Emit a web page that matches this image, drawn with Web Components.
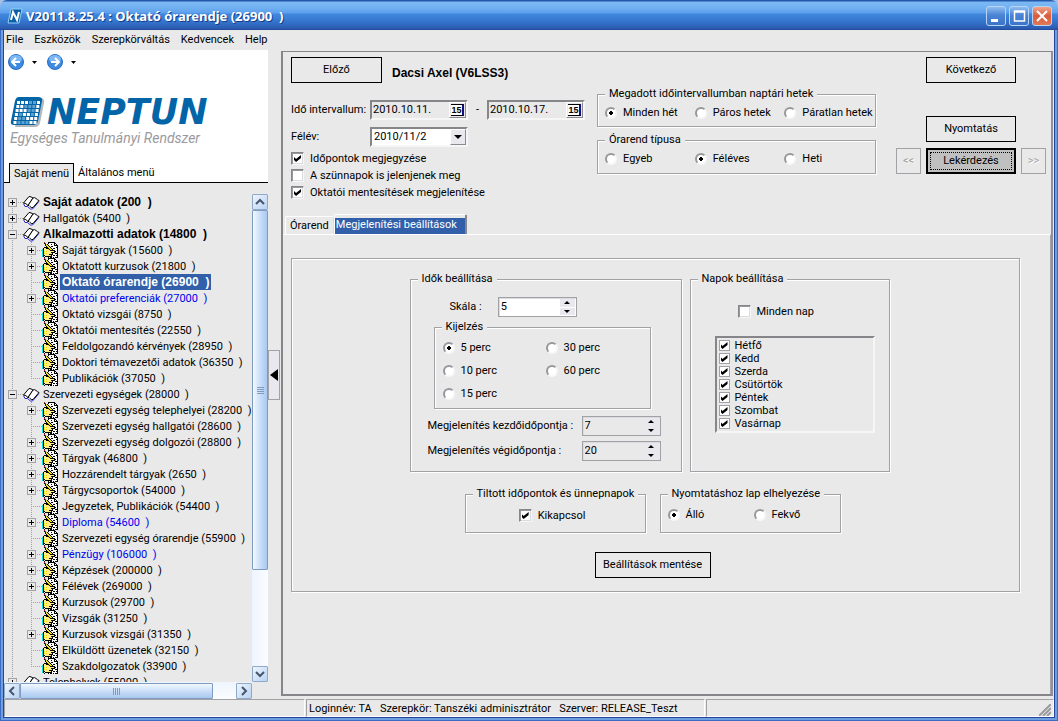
<!DOCTYPE html>
<html lang="hu">
<head>
<meta charset="utf-8">
<title>Oktató órarendje</title>
<style>
html,body{height:100%;margin:0}
body{font:11px/14px Roboto,"Liberation Sans",Arial,sans-serif;color:#000;background:#a9bfe6;overflow:hidden;
--face:#e9e9e9;--line:#a2a2a6;--dark:#85858a;--sel:#315fa9}
</style>
</head>
<body>
<neptun-app></neptun-app>
<script>
const define=(name,css,html,init)=>customElements.define(name,class extends HTMLElement{
  constructor(){super();this.attachShadow({mode:"open"})}
  connectedCallback(){
    if(this.shadowRoot.childNodes.length)return;
    const body=typeof html==="function"?html(this):html;
    this.shadowRoot.innerHTML=`<style>*{box-sizing:border-box}:host{box-sizing:border-box}button,input,select{font:inherit;color:inherit;margin:0}${css}</style>${body}`;
    if(init)init(this);
  }
});
const at=(el,n,d="")=>el.getAttribute(n)??d;

/* title bar */
define("title-bar",`
:host{display:flex;align-items:center;height:30px;padding:2px 6px 0 7px;gap:3px;border-radius:7px 7px 0 0;
background:linear-gradient(#2358ac 0,#2358ac 1px,#7cb8f2 2px,#74b3f2 7px,#5d9fec 13px,#3f87dd 14px,#3a7fd6 18px,#3069c2 25px,#2a57ab 29px,#1f4392 30px)}
h1{flex:1;margin:0;font:bold 13px/20px "Noto Sans",sans-serif;color:#fff;white-space:pre;text-shadow:1px 1px #123c8c}
button{width:20px;height:20px;padding:0;border:1px solid #b7d3f5;border-radius:3px;background:linear-gradient(#8fbdf0,#4b84d4 45%,#3c74c8)}
button.x{background:linear-gradient(#f2a58c,#dc5a3a 50%,#e07a58)}
button svg{display:block}
`,`<svg width="16" height="16"><path d="M4 1h11l-3 14H1z" fill="#0b5fa8"/><path d="M4 1h11l-3 14H1z" fill="none" stroke="#8fd0f5"/><path d="M4 12 6 4l4 8 2-8" stroke="#fff" stroke-width="2" fill="none"/></svg>
<h1><slot></slot></h1>
<button aria-label="Kis méret"><svg width="18" height="18"><path d="M4 12h7v3H4z" fill="#fff"/></svg></button>
<button aria-label="Teljes méret"><svg width="18" height="18"><path d="M4.500 4h10v10h-10zM4 5h11" fill="none" stroke="#fff" stroke-width="1.500"/></svg></button>
<button class="x" aria-label="Bezárás"><svg width="18" height="18"><path d="m4 4 10 10M14 4 4 14" stroke="#fff" stroke-width="2"/></svg></button>`);

define("menu-bar",`:host{display:block;background:var(--face)}
nav{display:flex;height:20px;gap:11px;padding-left:2px}
button{border:0;padding:0;background:none}`,
`<nav>${["File","Eszközök","Szerepkörváltás","Kedvencek","Help"].map(t=>`<button>${t}</button>`).join("")}</nav>`);

/* controls */
define("ui-button",`:host{display:block}
button{width:100%;height:26px;padding:0;border:1px solid #000;background:var(--face);white-space:nowrap}
button.def{border-width:2px;background:#c0c0c0;outline:1px dotted #000;outline-offset:-5px}
button:disabled{padding:0;border-color:var(--line);color:#a2a2a6;text-shadow:1px 1px #fff}`,
el=>`<button class="${el.hasAttribute("default")?"def":""}" ${el.hasAttribute("disabled")?"disabled":""}><slot></slot></button>`);

const checkCss=`
input[type=checkbox]{appearance:none;flex:none;width:13px;height:13px;background:#fff;border:1px solid;border-color:var(--dark) #f6f6f6 #f6f6f6 var(--dark);box-shadow:inset 1px 1px #98989c,inset -1px -1px #dcdce0}
input[type=checkbox]:checked::before{content:"";display:block;width:7px;height:7px;margin:2px;background:#000;clip-path:polygon(0 29%,29% 57%,100% 0,100% 43%,29% 100%,0 71%)}`;
define("ui-check",`:host{display:flex}label{display:flex;align-items:center;gap:6px;height:17px}${checkCss}
:host([flat]) label{height:13px;gap:5px}
:host([flat]) input{width:11px;height:11px;border-color:var(--line);box-shadow:none}
:host([flat]) input:checked::before{margin:1px}`,
el=>`<label><input type="checkbox" ${el.hasAttribute("checked")?"checked":""}><slot></slot></label>`);

define("ui-radios",`:host{display:grid;grid-template-columns:var(--cols,repeat(3,1fr));grid-template-rows:var(--rows,none);grid-auto-flow:var(--flow,row);row-gap:7px}
label{display:flex;align-items:center;gap:6px;height:16px;white-space:nowrap}
input{appearance:none;flex:none;width:12px;height:12px;border:2px solid;border-color:#98989c #f8f8f8 #f8f8f8 #98989c;border-radius:50%;background:#fff}
input:checked{background:radial-gradient(circle,#000 2px,#fff 2px)}`,
el=>at(el,"options").split("|").map((t,i)=>`<label><input type="radio" name="choice" ${i==+at(el,"value","0")?"checked":""}>${t}</label>`).join(""));

define("group-box",`:host{display:block}
fieldset{min-width:0;height:100%;margin:0;padding:var(--pad,4px 1px 4px 7px);border:1px solid var(--line);box-shadow:1px 1px #fff,inset 1px 1px #fff}
legend{padding:0 4px;margin:0;line-height:14px;background:var(--face)}
fieldset>legend{margin-left:var(--leg,0)}`,
el=>`<fieldset><legend>${at(el,"label")}</legend><slot></slot></fieldset>`);

define("ui-spin",`:host{display:flex;align-items:center}
label{flex:none}
div{display:flex;width:79px;height:20px;border:1px solid var(--line);background:var(--fill,var(--face));box-shadow:inset 1px 1px #dcdce0}
input{appearance:textfield;flex:1;min-width:0;padding:0 2px;border:0;background:none}
input::-webkit-inner-spin-button{appearance:none}
span{display:flex;flex-direction:column;gap:1px;width:16px;padding:1px 1px 1px 0}
button{flex:1;display:grid;place-items:center;padding:0;border:0;background:#e9e8ee}
svg{display:block}`,
el=>`<label for="n">${at(el,"label")}</label><div><input id="n" type="number" value="${at(el,"value")}"><span><button aria-label="Növelés"><svg width="6" height="3"><path d="m0 3 3-3 3 3z"/></svg></button><button aria-label="Csökkentés"><svg width="6" height="3"><path d="m0 0 3 3 3-3z"/></svg></button></span></div>`);

const sunk=`border:2px solid;border-color:var(--dark) #f6f6f6 #f6f6f6 var(--dark)`;
define("date-box",`:host{display:flex;width:98px;height:20px;${sunk};background:var(--face)}
input{flex:1;min-width:0;padding:0 1px;border:0;background:none}
button{width:17px;padding:0;margin:0;border:1px solid;border-color:#fff #8a8a90 #8a8a90 #fff;background:var(--face)}
i{display:block;margin:0 1px;border:solid #000;border-width:1px 0;border-right:2px solid #101080;background:#fff;font:bold 9px/10px "Liberation Sans",sans-serif}`,
el=>`<input aria-label="${at(el,"label")}" value="${at(el,"value")}"><button aria-label="Naptár"><i>15</i></button>`);
define("combo-box",`:host{display:grid;width:98px;height:20px;${sunk};background:#fff}
select,span{grid-area:1/1}
select{appearance:none;min-width:0;border:0;padding:0 2px;background:none}
span{justify-self:end;width:16px;display:grid;place-items:center;pointer-events:none;background:#e9e8ee;border:1px solid;border-color:#fff #8a8a90 #8a8a90 #fff}`,
el=>`<select aria-label="${at(el,"label")}"><option>${at(el,"value")}</option></select><span><svg width="8" height="4"><path d="m0 0h8l-4 4z"/></svg></span>`);

/* tree */
const book=`<svg width="17" height="16" viewBox="0 0 17 16"><path d="m.500 9.500 1.500 3 2.500 0 3 2.500h2l6.500-7.500" fill="#fff" stroke="#2424c8"/><path d="M.500 9 6 2.500q2 0 4 1.500L5 11.500Q3 9 .500 9z" fill="#fff" stroke="#000"/><path d="M5 11.500 10 4q1.500-1 3 .500t3 2L10 13.500q-2 .500-3-1t-2-1z" fill="#fff" stroke="#000"/></svg>`;
/* pixel map: k black, w white, y yellow, p pale yellow, c cyan, r red */
const art=["..r...kkkkkkk...","..kr..kwwwwwkk..","...kyk.wwkwwkwk.","...kyykwwwwwkkkk","....kyykwkkwwwwk","..kkkkyykwwwwwkk",".kppkkkyykwkkwwk","ckppppykyykwwwwk","ckppppppkkkkkwwk","ckypypppppppkkwk","ckpppppppkkkkwwk","ckypypppppkwwkkk","ckpppppkkkkwwwwk","ckkppppppkwkkwkk","ck.kkkkkkkwwwwwk","..k...kwkkwkwkkk"];
const ink={k:"#000",w:"#fff",y:"#f2dc10",p:"#ffee85",c:"#00dfe6",r:"#b02020"};
const hand=`<svg width="17" height="16" viewBox="0 0 17 16" shape-rendering="crispEdges">${Object.keys(ink).map(c=>`<path fill="${ink[c]}" d="${art.map((r,y)=>[...r].map((p,x)=>p===c?`M${x} ${y}h1v1h-1z`:"").join("")).join("")}"/>`).join("")}</svg>`;
define("tree-row",`:host{display:flex;height:16px;white-space:pre}
.c{flex:none;width:19px;display:grid;background:repeating-linear-gradient(var(--line) 0 1px,transparent 1px 2px) 8px 0/1px 100% no-repeat}
.c.h{background-image:repeating-linear-gradient(var(--line) 0 1px,transparent 1px 2px),repeating-linear-gradient(90deg,var(--line) 0 1px,transparent 1px 2px);background-size:1px 100%,11px 1px;background-position:8px 0,8px 8px}
.c.end{background-size:1px 8px,11px 1px}
.c.start{background-size:1px 8px,11px 1px;background-position:8px 8px,8px 8px}
button{width:9px;height:9px;margin:4px 0 0 4px;padding:0;border:1px solid var(--line);background:linear-gradient(#000,#000) 1px 3px/5px 1px no-repeat,linear-gradient(#000,#000) 3px 1px/1px 5px no-repeat var(--face)}
button.m{background:linear-gradient(#000,#000) 1px 3px/5px 1px no-repeat var(--face)}
svg{flex:none;margin-right:1px}
a{padding:2px 2px 0;line-height:14px;color:var(--ink,#000);text-decoration:none}
:host([sel]) a{background:var(--sel);color:#fff}
:host([bold]) a{padding:1px 2px;font:bold 12px/14px "Liberation Sans",Arial,sans-serif}
:host([blue]) a{color:#0000f0}`,
el=>{const l=at(el,"level"),x=at(el,"x"),b=x?`<button class="${x==="-"?"m":""}" aria-label="Kibontás"></button>`:"",e=at(el,"edge");
return l==="0"?`<span class="c h ${e}">${b}</span>${book}<a href="#"><slot></slot></a>`:`<span class="c"></span><span class="c h ${e}">${b}</span>${hand}<a href="#"><slot></slot></a>`});

/* level, expander, flags, text */
const rows=[
["0","+","bold","Saját adatok (200  )","start"],["0","+","","Hallgatók (5400  )"],["0","-","bold","Alkalmazotti adatok (14800  )"],
["1","+","","Saját tárgyak (15600  )"],["1","+","","Oktatott kurzusok (21800  )"],["1","","bold sel","Oktató órarendje (26900  )"],["1","+","blue","Oktatói preferenciák (27000  )"],["1","","","Oktató vizsgái (8750  )"],["1","","","Oktatói mentesítés (22550  )"],["1","","","Feldolgozandó kérvények (28950  )"],["1","","","Doktori témavezetői adatok (36350  )"],["1","","","Publikációk (37050  )","end"],
["0","-","","Szervezeti egységek (28000  )"],
["1","+","","Szervezeti egység telephelyei (28200  )"],["1","","","Szervezeti egység hallgatói (28600  )"],["1","+","","Szervezeti egység dolgozói (28800  )"],["1","+","","Tárgyak (46800  )"],["1","+","","Hozzárendelt tárgyak (2650  )"],["1","+","","Tárgycsoportok (54000  )"],["1","","","Jegyzetek, Publikációk (54400  )"],["1","+","blue","Diploma (54600  )"],["1","","","Szervezeti egység órarendje (55900  )"],["1","+","blue","Pénzügy (106000  )"],["1","+","","Képzések (200000  )"],["1","+","","Félévek (269000  )"],["1","","","Kurzusok (29700  )"],["1","","","Vizsgák (31250  )"],["1","+","","Kurzusok vizsgái (31350  )"],["1","","","Elküldött üzenetek (32150  )"],["1","","","Szakdolgozatok (33900  )","end"],
["0","+","","Telephelyek (55000  )"]];

define("scroll-bar",`:host{display:flex;flex-direction:var(--dir,column);background:linear-gradient(var(--ang,90deg),#eef5ff,#fbfdff)}
button{flex:none;width:16px;height:16px;padding:0;border:1px solid #8fa9c6;border-radius:1px;background:linear-gradient(135deg,#eef5fe,#b9d3f3);display:grid;place-items:center}
div{display:grid;place-items:center;border:1px solid #7f9cc0;border-radius:1px;background:linear-gradient(var(--ang,90deg),#f2f8ff,#c3daf7 60%,#a9c8f0)}`,
el=>{const h=el.hasAttribute("horizontal"),s=d=>`<svg width="10" height="10"><path d="${d}" fill="none" stroke="#45566e" stroke-width="2"/></svg>`,g=[0,2,4,6].map(i=>h?`M${i+.5} 0v7`:`M0 ${i+.5}h7`).join("");
return `<style>:host{${h?"--dir:row;--ang:180deg":""}}</style><button aria-label="Vissza">${s(h?"M7 1 3 5l4 4":"m1 7 4-4 4 4")}</button><div style="flex:${at(el,"thumb")}"><svg width="7" height="7"><path d="${g}" stroke="#7f9cc0"/></svg></div><span style="flex:${at(el,"rest")}"></span><button aria-label="Előre">${s(h?"m3 1 4 4-4 4":"m1 3 4 4 4-4")}</button>`});

const nav=d=>`<button aria-label="Lapozás"><svg width="16" height="16"><circle cx="8" cy="8" r="7.500" fill="#3d8ae0" stroke="#2b6cc4"/><ellipse cx="8" cy="5" rx="6" ry="4" fill="#7db8f4"/><path d="${d}" fill="none" stroke="#fff" stroke-width="2"/></svg></button><svg width="5" height="3"><path d="M0 0h5L2.500 3z"/></svg>`;
let dots="";for(let y=0;y<6;y++)for(let x=0;x<6;x++){const n=x===0||x===5||x===y||x===y-1||y===0&&x<3;dots+=`<rect x="${7+x*4-y*.7}" y="${5+y*4}" width="3" height="3" fill="${n?"#fff":"#5aa2d2"}"/>`}
define("side-panel",`:host{display:flex;flex-direction:column;min-height:0;background:var(--face)}
header{background:#fff;display:flex;flex-direction:column}
.nav{display:flex;align-items:center;gap:8px;height:24px;padding-left:4px}
.nav button{border:0;padding:0;background:none;height:16px}
.nav button~button{margin-left:2px}
.logo{display:flex;align-items:center;height:32px;margin:22px 0 0 6px}
.logo b{font:italic bold 35px/32px "DejaVu Sans",sans-serif;color:#0365a8}
.sub{margin:1px 0 0 6px;font:italic 14px/18px Roboto,sans-serif;color:#9a9a9e;white-space:nowrap}
.tabs{display:flex;height:20px;margin-top:16px;padding-left:5px;border-bottom:1px solid #000}
.tabs button{border:0;background:none;padding:0 4px}
.tabs .on{height:20px;border:1px solid #000;border-bottom:0;background:var(--face)}
main{flex:1;min-height:0;display:grid;grid-template:1fr 17px/1fr 16px;margin-top:11px}
.tree{overflow:hidden;min-height:0}
scroll-bar[horizontal]{padding:1px 0 0}`,
`<header><div class="nav">${nav("M12 8H5M8 4 4 8l4 4")}${nav("M4 8h7M8 4l4 4-4 4")}</div>
<div class="logo"><svg width="37" height="32"><path d="M10 2h20q5 0 4 5l-4 20q-1 4-5 4H5z" fill="#b4b8bc"/><path d="M9 1h19q5 0 4 4l-4 20q-1 4-5 4H4q-4 0-3-4L5 5q1-4 4-4z" fill="#0365a8"/>${dots}</svg><b>NEPTUN</b></div>
<div class="sub">Egységes Tanulmányi Rendszer</div>
<div class="tabs"><button class="on">Saját menü</button><button>Általános menü</button></div></header>
<main><div class="tree">${rows.map(r=>`<tree-row level="${r[0]}" x="${r[1]}" ${r[2]} edge="${r[4]||""}">${r[3]}</tree-row>`).join("")}</div>
<scroll-bar thumb="358" rest="96"></scroll-bar><scroll-bar horizontal thumb="191" rest="23"></scroll-bar></main>`);

define("split-bar",`:host{display:flex;align-items:center;background:var(--face)}
button{width:12px;height:50px;padding:0;border:1px solid var(--line);background:#e9e8ee;display:grid;place-items:center}`,
`<button aria-label="Menü elrejtése"><svg width="8" height="12"><path d="M8 0v12L0 6z"/></svg></button>`);

define("query-head",`:host{display:grid;grid-template-columns:306px minmax(270px,1fr) auto;padding:5px 5px 0 8px}
.who{display:flex;align-items:center;gap:10px;height:26px}
.who ui-button{width:91px}.who b{font:bold 12px/14px "Liberation Sans",Arial,sans-serif;padding-top:6px}
.f{display:grid;grid-template-columns:79px auto;align-items:center;justify-content:start;row-gap:7px;margin:17px 0 3px}
.d{display:flex;align-items:center}.d span{width:19px;text-align:center}
.mid{margin:30px 20px 0 0;display:grid;grid-template-rows:40px 41px;gap:6px}
.r{display:grid;grid-template-columns:25px 90px 25px;gap:6px 5px;align-content:start}
.m{grid-column:2}.first{margin-bottom:27px}.p{grid-row:3}`,
`<section><div class="who"><ui-button>Előző</ui-button><b>Dacsi Axel (V6LSS3)</b></div>
<div class="f"><span>Idő intervallum:</span><div class="d"><date-box label="Kezdete" value="2010.10.11."></date-box><span>-</span><date-box label="Vége" value="2010.10.17."></date-box></div>
<span>Félév:</span><combo-box label="Félév" value="2010/11/2"></combo-box></div>
<ui-check checked>Időpontok megjegyzése</ui-check><ui-check>A szünnapok is jelenjenek meg</ui-check><ui-check checked>Oktatói mentesítések megjelenítése</ui-check></section>
<section class="mid"><group-box label="Megadott időintervallumban naptári hetek"><ui-radios options="Minden hét|Páros hetek|Páratlan hetek"></ui-radios></group-box>
<group-box label="Órarend típusa"><ui-radios options="Egyeb|Féléves|Heti" value="1"></ui-radios></group-box></section>
<section class="r"><ui-button class="m first">Következő</ui-button><ui-button class="m">Nyomtatás</ui-button><ui-button class="p" disabled>&lt;&lt;</ui-button><ui-button class="p" default>Lekérdezés</ui-button><ui-button class="p" disabled>&gt;&gt;</ui-button></section>`);

define("tab-strip",`:host{display:flex;align-items:flex-end;height:20px;padding-left:2px}
button{height:18px;padding:0 4px;border:1px solid #fff;border-right-color:#dcdce0;border-bottom:0;border-radius:2px 2px 0 0;background:none;white-space:nowrap}
.on{height:20px;padding:3px 0 0;border-right:2px solid var(--dark)}
.on span{display:block;height:17px;padding:0 8px 0 1px;background:var(--sel);color:#fff}`,
`<button>Órarend</button><button class="on"><span>Megjelenítési beállítások</span></button>`);

define("settings-page",`:host{flex:1;display:block;padding:23px 30px 24px 8px;border-top:1px solid #fff;border-right:1px solid var(--line)}
.box{height:334px;padding:13px 6px 0 0;border:1px solid var(--line);box-shadow:1px 1px #fff,inset 1px 1px #fff;display:flex;flex-direction:column;align-items:center}
.top{display:flex;gap:8px;height:200px;padding-right:6px}
.time{width:272px;--pad:11px 1px 0 7px}
.time>ui-spin{padding-left:10px}
.scale{--fill:#fff;gap:16px}
ui-spin.scale{padding-left:32px}
.kij{width:217px;height:89px;margin:3px 0 7px 16px;--pad:6px 1px 0 8px;--leg:-1px}
.kij ui-radios{--cols:103px 1fr;--rows:repeat(3,16px);--flow:column}
.pair{display:grid;gap:5px;margin-left:10px}
.pair ui-spin{justify-content:space-between;width:233px}
.days{width:200px;--pad:17px 1px 0 7px}
.days>ui-check{margin-left:40px}
.list{display:block;width:160px;margin:16px 0 0 17px;height:97px;padding:1px 0 0 2px;border:2px solid;border-color:var(--dark) #f6f6f6 #f6f6f6 var(--dark)}
.low{display:flex;gap:14px;margin-top:15px}
.low group-box{width:181px;height:46px;--pad:6px 1px 0 7px}
.low ui-check{justify-content:center;padding-right:12px}
.low ui-radios{--cols:86px 1fr}
.save{width:116px;margin-top:19px}`,
`<div class="box"><div class="top"><group-box class="time" label="Idők beállítása"><ui-spin class="scale" label="Skála :" value="5"></ui-spin>
<group-box class="kij" label="Kijelzés"><ui-radios options="5 perc|10 perc|15 perc|30 perc|60 perc"></ui-radios></group-box>
<div class="pair"><ui-spin label="Megjelenítés kezdőidőpontja :" value="7"></ui-spin><ui-spin label="Megjelenítés végidőpontja :" value="20"></ui-spin></div></group-box>
<group-box class="days" label="Napok beállítása"><ui-check>Minden nap</ui-check><div class="list">${["Hétfő","Kedd","Szerda","Csütörtök","Péntek","Szombat","Vasárnap"].map(d=>`<ui-check flat checked>${d}</ui-check>`).join("")}</div></group-box></div>
<div class="low"><group-box label="Tiltott időpontok és ünnepnapok"><ui-check checked>Kikapcsol</ui-check></group-box><group-box label="Nyomtatáshoz lap elhelyezése"><ui-radios options="Álló|Fekvő"></ui-radios></group-box></div>
<ui-button class="save">Beállítások mentése</ui-button></div>`);

define("status-bar",`:host{display:grid;grid-template-columns:301px 399px 1fr;gap:1px;height:18px;background:var(--face)}
div{border:1px solid;border-color:var(--line) #fff #fff var(--line);padding:2px 2px 0;white-space:pre;display:flex;justify-content:space-between}
svg{align-self:end}`,
`<div></div><div>Loginnév: TA   Szerepkör: Tanszéki adminisztrátor   Szerver: RELEASE_Teszt</div><div><span></span><svg width="12" height="12"><path d="M0 12 12 0M4 12l8-8M8 12l4-4" stroke="#9a9a9e" stroke-width="2"/></svg></div>`);

define("neptun-app",`:host{display:flex;flex-direction:column;height:100vh}
.win{flex:1;min-height:0;display:flex;flex-direction:column;margin:0 3px 3px;border:1px solid #24459c;border-top:0;background:var(--face);box-shadow:0 0 0 2px #6f9ee0,0 0 0 3px #3a6cc4;clip-path:inset(0 -3px -3px)}
.body{flex:1;min-height:0;display:grid;grid-template-columns:264px 13px 1fr;grid-template-rows:minmax(0,1fr)}
.panel{display:flex;flex-direction:column;min-width:0;margin:1px 1px 3px 0;border:2px solid var(--dark);border-top-width:1px;border-right-color:#929296}
tab-strip{margin-top:13px}`,
`<title-bar>V2011.8.25.4 : Oktató órarendje (26900  )</title-bar><div class="win"><menu-bar></menu-bar><div class="body"><side-panel></side-panel><split-bar></split-bar>
<div class="panel"><query-head></query-head><tab-strip></tab-strip><settings-page></settings-page></div></div><status-bar></status-bar></div>`);
</script>
</body>
</html>
